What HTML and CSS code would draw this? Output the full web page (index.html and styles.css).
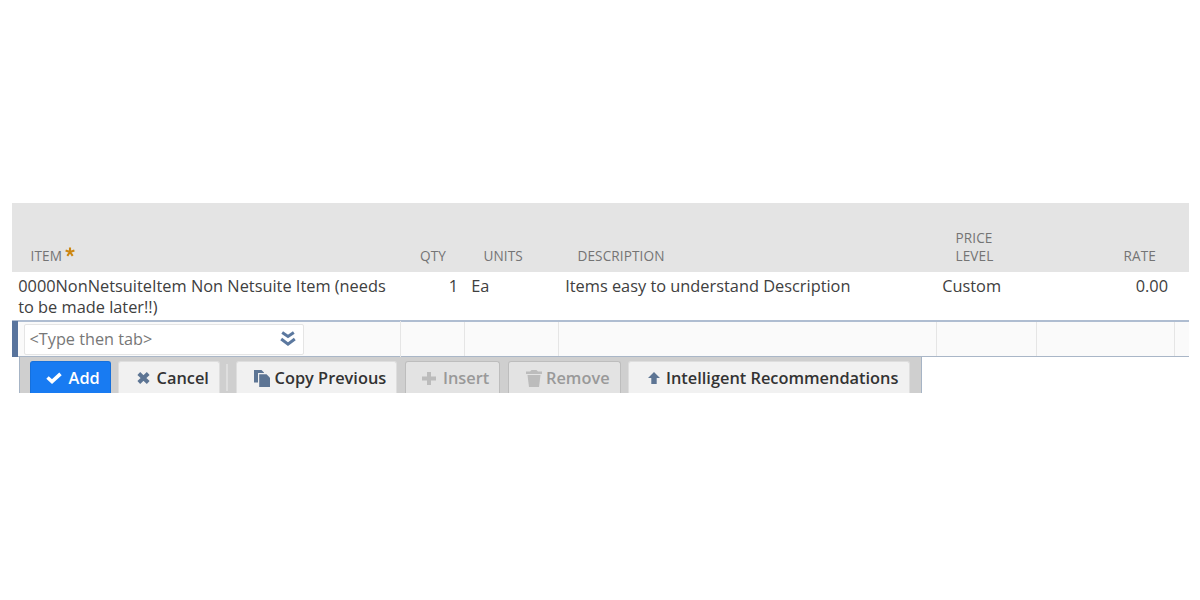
FILE: index.html
```html
<!DOCTYPE html>
<html lang="en">
<head>
<meta charset="utf-8">
<title>Items</title>
<link rel="stylesheet" href="styles.css">
</head>
<body>
<main class="sublist">
  <div class="row head">
    <div class="th">ITEM<svg class="star" viewBox="0 0 10 10"><path d="M5 5V.4M5 5L.6 3.6M5 5l4.400-1.400M5 5L2.300 8.800M5 5l2.700 3.800"/></svg></div>
    <div class="th right">QTY</div>
    <div class="th">UNITS</div>
    <div class="th">DESCRIPTION</div>
    <div class="th">PRICE<br>LEVEL</div>
    <div class="th right">RATE</div>
    <div></div>
  </div>
  <div class="row line">
    <div class="td">0000NonNetsuiteItem Non Netsuite Item (needs<br>to be made later!!)</div>
    <div class="td right">1</div>
    <div class="td">Ea</div>
    <div class="td">Items easy to understand Description</div>
    <div class="td level">Custom</div>
    <div class="td right">0.00</div>
    <div></div>
  </div>
  <div class="row edit">
    <div class="cell first">
      <div class="picker"><span>&lt;Type then tab&gt;</span>
        <svg class="chevrons" viewBox="0 0 16 16"><path d="M2.200 1.600L8 5.400l5.800-3.800M1.200 8L8 13.200 14.800 8"/></svg>
      </div>
    </div>
    <div class="cell"></div><div class="cell"></div><div class="cell"></div><div class="cell"></div><div class="cell"></div><div class="cell"></div>
  </div>
  <div class="toolbar">
    <div class="btn primary add"><svg class="i-check" viewBox="0 0 16 12"><path d="M1.500 5.500l4.500 4L14.500 1.800"/></svg><span>Add</span></div>
    <div class="btn cancel"><svg class="i-x" viewBox="0 0 13 12"><path d="M1.800 1.500l9.400 9M11.200 1.500l-9.400 9"/></svg><span>Cancel</span></div>
    <div class="sep"></div>
    <div class="btn copy"><svg class="i-copy" viewBox="0 0 16 17"><path d="M0 0h7.500L10 2.500V3H4v9.500H0z"/><path d="M5.200 4.200H12.500L16 7.700V17H5.200z"/></svg><span>Copy Previous</span></div>
    <div class="btn disabled insert"><svg class="i-plus" viewBox="0 0 14 13"><path d="M7 0v13M0 6.500h14"/></svg><span>Insert</span></div>
    <div class="btn disabled remove"><svg class="i-trash" viewBox="0 0 16 17"><path d="M0 1.500h4L5.500 0h5L12 1.500h4V4H0zM1.500 5h13L13 17H3z"/></svg><span>Remove</span></div>
    <div class="btn recs"><svg class="i-up" viewBox="0 0 12 12"><path d="M6 0l6 6H8.700v6H3.300V6H0z"/></svg><span>Intelligent Recommendations</span></div>
  </div>
</main>
</body>
</html>
```
FILE: styles.css
```css
* { box-sizing: border-box; }
body { margin: 0; background: #fff; font-family: "Open Sans", sans-serif; color: #404040; }
svg { display: block; flex: none; }
.sublist { width: 1176.5px; margin: 203px 0 0 12px; }
.row { display: grid; grid-template-columns: 389px 64px 94px 378px 100px 138px 13.5px; }
.head { height: 69px; background: #e4e4e4; align-items: end; }
.th { display: flex; padding: 0 0 7px 18.5px; font-size: 13.6px; line-height: 18px; letter-spacing: .1px; color: #747474; }
.th.right { justify-content: flex-end; padding-right: 19px; }
.star { width: 10px; height: 10px; margin: 0 0 0 3px; fill: none; stroke: #cc8611; stroke-width: 2.1; }
.line { height: 48px; }
.td { padding: 4px 0 0 6.2px; font-size: 16.35px; line-height: 21px; white-space: nowrap; }
.td.level { padding-left: 5.2px; }
.td.right { text-align: right; padding-right: 7px; }
.edit { height: 37px; background: #fafafa; border-top: 2px solid #afbdd1; border-bottom: 1px solid #a9b6c7; }
.cell { border-right: 1px solid #e5e5e5; }
.cell:last-child { border-right: 0; }
.first { border-left: 6px solid #58749d; margin: -1px 0 -1px; padding: 3px 0 0 6px; }
.picker { width: 280px; height: 31px; display: flex; align-items: center; justify-content: space-between; padding: 0 7px 1px 4.500px; background: #fff; border: 1px solid #e5e5e5; border-radius: 2px; font-size: 16.250px; color: #777; }
.chevrons { width: 16px; height: 16px; fill: none; stroke: #5b789f; stroke-width: 3; }
.toolbar { display: flex; width: 903px; height: 36px; margin-left: 7px; padding: 4px 0 0 10px; overflow: hidden; background: #cfcfcf; border-left: 1px solid #a6b4c5; border-right: 1px solid #a6b4c5; }
.btn { display: flex; align-items: center; flex: none; height: 36px; padding-bottom: 3px; border: 1px solid #dedede; border-bottom: 0; border-radius: 3px 3px 0 0; background: #f1f1f1; font-size: 16.350px; font-weight: 600; color: #333; white-space: nowrap; }
.btn span { margin-top: -1px; }
.btn svg { fill: #5d7594; }
.primary { background: #187bf2; border-color: #1670dc; color: #fff; }
.disabled { background: #e3e3e3; border-color: #bdbdbd; color: #999; }
.btn.disabled svg { fill: #bcbcbc; }
.add { width: 81px; padding-left: 15px; gap: 6.6px; }
.cancel { width: 102px; margin-left: 7px; padding-left: 18px; gap: 6.6px; }
.sep { width: 2px; height: 27px; margin: 3px 8px 0 6px; background: #dedede; }
.copy { width: 161px; padding-left: 17px; gap: 4.600px; }
.insert { width: 95px; margin-left: 8px; padding-left: 16px; gap: 7px; }
.remove { width: 113px; margin-left: 8px; padding-left: 17px; gap: 4px; }
.recs { width: 282px; margin-left: 7px; padding-left: 19px; gap: 6px; }
.btn .i-check { width: 16px; height: 12px; fill: none; stroke: #fff; stroke-width: 3.600; }
.btn .i-x { width: 13px; height: 12px; fill: none; stroke: #5d7594; stroke-width: 4; }
.i-copy { width: 16px; height: 17px; }
.btn .i-plus { width: 14px; height: 13px; stroke: #bcbcbc; stroke-width: 4; }
.i-trash { width: 16px; height: 17px; }
.i-up { width: 12px; height: 12px; }
```
